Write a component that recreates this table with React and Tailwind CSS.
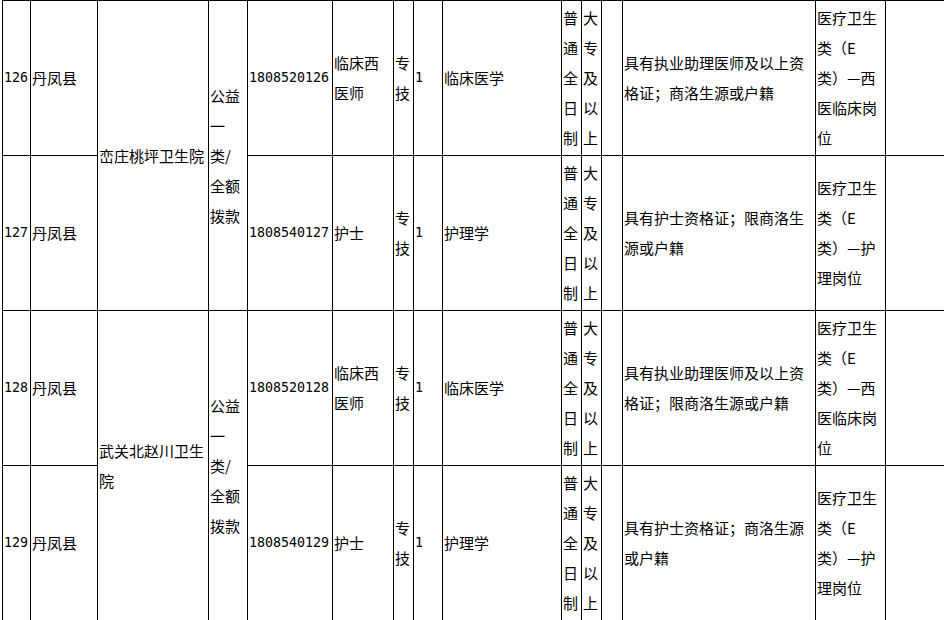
import React from "react";

const cjk = "font-['Noto_Sans_CJK_SC','Noto_Sans',sans-serif]";
const mono = "font-['DejaVu_Sans_Mono',monospace] text-[13.3px]";

// one table cell: lines are given explicitly so wrapping matches the sheet
const Cell = ({ lines = [], num = false, span = false }) => (
  <div className={`bg-white flex items-center pl-[1px] overflow-hidden ${span ? "row-span-2" : ""}`}>
    <div className="whitespace-nowrap">
      {lines.map((l, i) => (
        <div key={i} className={num ? mono : ""}>
          {l}
        </div>
      ))}
    </div>
  </div>
);

const fullTime = ["普", "通", "全", "日", "制"];
const college = ["大", "专", "及", "以", "上"];

const rows = [
  {
    no: "126",
    unit: ["峦庄桃坪卫生院"],
    code: "1808520126",
    post: ["临床西", "医师"],
    major: "临床医学",
    req: ["具有执业助理医师及以上资", "格证；商洛生源或户籍"],
    cat: ["医疗卫生", "类（E", "类）—西", "医临床岗", "位"],
  },
  {
    no: "127",
    code: "1808540127",
    post: ["护士"],
    major: "护理学",
    req: ["具有护士资格证；限商洛生", "源或户籍"],
    cat: ["医疗卫生", "类（E", "类）—护", "理岗位"],
  },
  {
    no: "128",
    unit: ["武关北赵川卫生", "院"],
    code: "1808520128",
    post: ["临床西", "医师"],
    major: "临床医学",
    req: ["具有执业助理医师及以上资", "格证；限商洛生源或户籍"],
    cat: ["医疗卫生", "类（E", "类）—西", "医临床岗", "位"],
  },
  {
    no: "129",
    code: "1808540129",
    post: ["护士"],
    major: "护理学",
    req: ["具有护士资格证；商洛生源", "或户籍"],
    cat: ["医疗卫生", "类（E", "类）—护", "理岗位"],
  },
];

export default function App() {
  return (
    <div className={`w-[944px] h-[620px] overflow-hidden bg-white text-black text-[15px] leading-[30px] ${cjk}`}>
      <div className="ml-[2px] w-max grid grid-cols-[27px_66px_110px_38px_84px_60px_19px_28px_118px_19px_19px_20px_192px_69px_200px] grid-rows-[154px_154px_154px_154px] gap-px bg-black border-l border-t border-black">
        {rows.map((r) => (
          <React.Fragment key={r.no}>
            <Cell lines={[r.no]} num />
            <Cell lines={["丹凤县"]} />
            {r.unit && <Cell lines={r.unit} span />}
            {r.unit && <Cell lines={["公益", "一", "类/", "全额", "拨款"]} span />}
            <Cell lines={[r.code]} num />
            <Cell lines={r.post} />
            <Cell lines={["专", "技"]} />
            <Cell lines={["1"]} num />
            <Cell lines={[r.major]} />
            <Cell lines={fullTime} />
            <Cell lines={college} />
            <Cell />
            <Cell lines={r.req} />
            <Cell lines={r.cat} />
            <Cell />
          </React.Fragment>
        ))}
      </div>
    </div>
  );
}
